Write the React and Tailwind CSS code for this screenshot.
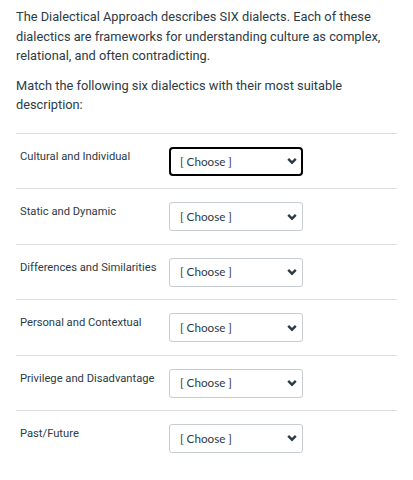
import React from 'react';

const rows = [
  'Cultural and Individual',
  'Static and Dynamic',
  'Differences and Similarities',
  'Personal and Contextual',
  'Privilege and Disadvantage',
  'Past/Future',
];

const Chevron = () => (
  <svg width="10" height="7" viewBox="0 0 10 7" className="pointer-events-none absolute right-[6px] top-1/2 -translate-y-1/2">
    <path d="M1.2 1.4 L5 5.2 L8.8 1.4" fill="none" stroke="#2d3b45" strokeWidth="2.4" />
  </svg>
);

const ChooseSelect = ({ focused }) => (
  <div className="relative w-[134px] h-[29px]">
    <select
      defaultValue=""
      className={
        focused
          ? "appearance-none w-full h-full border-2 border-black rounded-[4px] pl-[9px] font-['Lato',sans-serif] text-[11.7px] text-[#2d3b45] bg-white outline-none"
          : "appearance-none w-full h-full border border-[#c7cdd1] rounded-[3px] pl-[10px] font-['Lato',sans-serif] text-[11.7px] text-[#2d3b45] bg-white outline-none"
      }
    >
      <option value="">[ Choose ]</option>
    </select>
    <Chevron />
  </div>
);

export default function App() {
  return (
    <div className="px-4 pt-[7px] bg-white text-[#2d3b45] font-['Roboto',sans-serif] min-h-[480px]">
      <p className="text-[12.8px] leading-[19.6px] pr-[10px]">
        The Dialectical Approach describes SIX dialects. Each of these dialectics are frameworks for understanding culture as complex, relational, and often contradicting.
      </p>
      <p className="mt-[10px] text-[12.8px] leading-[19.6px] pr-10">
        Match the following six dialectics with their most suitable description:
      </p>
      <div className="mt-[18px]">
        {rows.map((label, i) => (
          <div key={label} className="flex border-t border-[#dddddd] h-[55.4px]">
            <div className="w-[153px] pl-1 pt-[16px] text-[11.2px] leading-[14px]">{label}</div>
            <div className="pt-[13px]">
              <ChooseSelect focused={i === 0} />
            </div>
          </div>
        ))}
      </div>
    </div>
  );
}
